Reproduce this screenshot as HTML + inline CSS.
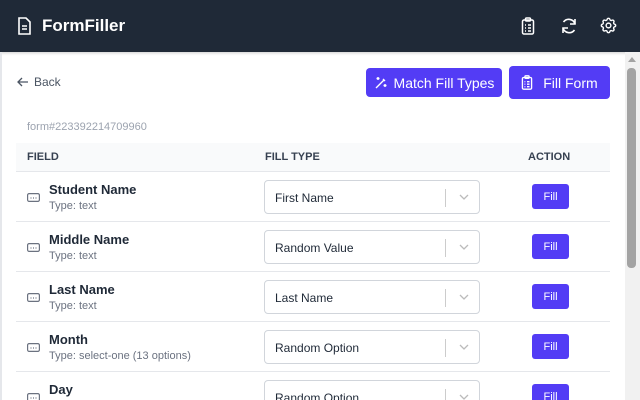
<!DOCTYPE html>
<html><head><meta charset="utf-8"><style>
*{box-sizing:border-box;margin:0;padding:0}
html,body{width:640px;height:400px;overflow:hidden;background:#fff}
body{font-family:"Liberation Sans",sans-serif}
#w{position:relative;width:640px;height:400px;overflow:hidden}
.hdr{position:absolute;left:0;top:0;width:640px;height:52px;background:#1f2937;box-shadow:0 1px 3px rgba(0,0,0,.2)}
.title{position:absolute;left:42px;top:16px;color:#fff;font-weight:bold;font-size:17px}
.lb{position:absolute;left:0;top:52px;width:2px;height:348px;background:#e5e7eb}
.sb{position:absolute;left:625px;top:52px;width:15px;height:348px;background:#f1f1f1}
.thumb{position:absolute;left:627px;top:68px;width:9px;height:200px;background:#a3a3a3;border-radius:4px}
.btn{position:absolute;background:#533cf5;color:#fff;border-radius:4px;font-size:14px;display:flex;align-items:center;justify-content:center;gap:6px}
.t{position:absolute;font-size:12px}
.row{position:absolute;left:16px;width:594px;height:50px;border-bottom:1px solid #e5e7eb}
.name{position:absolute;left:33px;top:10px;font-size:13px;font-weight:bold;color:#1f2937}
.type{position:absolute;left:33px;top:28px;font-size:11px;color:#6b7280}
.ic{position:absolute;left:11px;top:21px}
.sel{position:absolute;left:248px;top:8px;width:216px;height:34px;border:1px solid #d1d5db;border-radius:4px;font-size:12px;color:#1f2937;padding:10px 0 0 10px}
.sel:after{content:"";position:absolute;left:180px;top:8px;width:1px;height:18px;background:#ccc}
.chev{position:absolute;left:193px;top:10px}
.fb{position:absolute;left:516px;top:12px;width:37px;height:25px;background:#533cf5;color:#fff;border-radius:3px;font-size:11px;display:flex;align-items:center;justify-content:center}
</style></head><body><div id="w">
<div class="hdr">
<svg style="position:absolute;left:17px;top:17px" width="14" height="18" viewBox="0 0 14 18" fill="none" stroke="#fff" stroke-width="1.6"><path d="M2 1h7l4 4v12H2z"/><path d="M5 9h5M5 12h5"/></svg>
<div class="title">FormFiller</div>
<svg style="position:absolute;left:521px;top:17px" width="14" height="18" viewBox="0 0 14 18" fill="none" stroke="#fff" stroke-width="1.5"><rect x="1.5" y="3" width="11" height="14" rx="1.5"/><rect x="4.5" y="1" width="5" height="3" rx="1"/><path d="M4 8h1M7 8h3M4 11h1M7 11h3M4 14h1M7 14h3"/></svg>
<svg style="position:absolute;left:560px;top:17px" width="18" height="18" viewBox="0 0 18 18" fill="none" stroke="#fff" stroke-width="1.6"><path d="M15 7A6.5 6.5 0 0 0 3.5 5M3 11a6.5 6.5 0 0 0 11.5 2"/><path d="M15 2v5h-5M3 16v-5h5"/></svg>
<svg style="position:absolute;left:599px;top:16px" width="19" height="19" viewBox="0 0 24 24" fill="none" stroke="#fff" stroke-width="1.8"><path d="M10.3 4.3c.4-1.8 3-1.8 3.4 0a1.7 1.7 0 0 0 2.6 1.1c1.5-.9 3.3.8 2.4 2.4a1.7 1.7 0 0 0 1 2.5c1.8.4 1.8 3 0 3.4a1.7 1.7 0 0 0-1 2.6c.9 1.5-.9 3.3-2.4 2.4a1.7 1.7 0 0 0-2.6 1c-.4 1.8-3 1.8-3.4 0a1.7 1.7 0 0 0-2.6-1c-1.5.9-3.3-.9-2.4-2.4a1.7 1.7 0 0 0-1-2.6c-1.8-.4-1.8-3 0-3.4a1.7 1.7 0 0 0 1-2.5c-.9-1.6.9-3.3 2.4-2.4a1.7 1.7 0 0 0 2.6-1.1z"/><circle cx="12" cy="12" r="3"/></svg>
</div>
<div class="lb"></div>
<svg style="position:absolute;left:17px;top:77px" width="12" height="10" viewBox="0 0 12 10" fill="none" stroke="#4b5563" stroke-width="1.3"><path d="M11 5H1M5 1L1 5l4 4"/></svg>
<div class="t" style="left:34px;top:75px;color:#4b5563">Back</div>
<div class="btn" style="left:366px;top:68px;width:136px;height:29px"><svg width="14" height="14" viewBox="0 0 14 14" fill="none" stroke="#fff" stroke-width="1.4"><path d="M2 12l8-8M9 3l2 2"/><path d="M4 1v3M2.5 2.5h3M11 8v3M9.5 9.5h3"/></svg>Match Fill Types</div>
<div class="btn" style="left:509px;top:66px;width:101px;height:33px"><svg width="12" height="15" viewBox="0 0 14 18" fill="none" stroke="#fff" stroke-width="1.6"><rect x="1.5" y="3" width="11" height="14" rx="1.5"/><rect x="4.5" y="1" width="5" height="3" rx="1"/><path d="M4 8h1M7 8h3M4 11h1M7 11h3M4 14h1M7 14h3"/></svg>&nbsp;Fill Form</div>
<div class="t" style="left:27px;top:121px;color:#9ca3af;font-size:11px">form#223392214709960</div>
<div style="position:absolute;left:16px;top:143px;width:594px;height:29px;background:#f9fafb;border-bottom:1px solid #e5e7eb"></div>
<div class="t" style="left:27px;top:151px;font-size:11px;font-weight:bold;color:#374151">FIELD</div>
<div class="t" style="left:265px;top:151px;font-size:11px;font-weight:bold;color:#374151">FILL TYPE</div>
<div class="t" style="left:528px;top:151px;font-size:11px;font-weight:bold;color:#374151">ACTION</div>

<div class="row" style="top:172px"><svg class="ic" width="13" height="9" viewBox="0 0 13 9" fill="none" stroke="#6b7280" stroke-width="1.2"><rect x=".6" y=".6" width="11.8" height="7.8" rx="1.5"/><path d="M3.5 5h1M6 5h1M8.5 5h1"/></svg><div class="name">Student Name</div><div class="type">Type: text</div><div class="sel">First Name<svg class="chev" width="12" height="12" viewBox="0 0 12 12" fill="none" stroke="#bbb" stroke-width="1.3"><path d="M2 4l4 4 4-4"/></svg></div><div class="fb">Fill</div></div>
<div class="row" style="top:222px"><svg class="ic" width="13" height="9" viewBox="0 0 13 9" fill="none" stroke="#6b7280" stroke-width="1.2"><rect x=".6" y=".6" width="11.8" height="7.8" rx="1.5"/><path d="M3.5 5h1M6 5h1M8.5 5h1"/></svg><div class="name">Middle Name</div><div class="type">Type: text</div><div class="sel">Random Value<svg class="chev" width="12" height="12" viewBox="0 0 12 12" fill="none" stroke="#bbb" stroke-width="1.3"><path d="M2 4l4 4 4-4"/></svg></div><div class="fb">Fill</div></div>
<div class="row" style="top:272px"><svg class="ic" width="13" height="9" viewBox="0 0 13 9" fill="none" stroke="#6b7280" stroke-width="1.2"><rect x=".6" y=".6" width="11.8" height="7.8" rx="1.5"/><path d="M3.5 5h1M6 5h1M8.5 5h1"/></svg><div class="name">Last Name</div><div class="type">Type: text</div><div class="sel">Last Name<svg class="chev" width="12" height="12" viewBox="0 0 12 12" fill="none" stroke="#bbb" stroke-width="1.3"><path d="M2 4l4 4 4-4"/></svg></div><div class="fb">Fill</div></div>
<div class="row" style="top:322px"><svg class="ic" width="13" height="9" viewBox="0 0 13 9" fill="none" stroke="#6b7280" stroke-width="1.2"><rect x=".6" y=".6" width="11.8" height="7.8" rx="1.5"/><path d="M3.5 5h1M6 5h1M8.5 5h1"/></svg><div class="name">Month</div><div class="type">Type: select-one (13 options)</div><div class="sel">Random Option<svg class="chev" width="12" height="12" viewBox="0 0 12 12" fill="none" stroke="#bbb" stroke-width="1.3"><path d="M2 4l4 4 4-4"/></svg></div><div class="fb">Fill</div></div>
<div class="row" style="top:372px;height:28px;overflow:hidden;border:0"><svg class="ic" width="13" height="9" viewBox="0 0 13 9" fill="none" stroke="#6b7280" stroke-width="1.2"><rect x=".6" y=".6" width="11.8" height="7.8" rx="1.5"/><path d="M3.5 5h1M6 5h1M8.5 5h1"/></svg><div class="name">Day</div><div class="type">Type: select-one</div><div class="sel">Random Option<svg class="chev" width="12" height="12" viewBox="0 0 12 12" fill="none" stroke="#bbb" stroke-width="1.3"><path d="M2 4l4 4 4-4"/></svg></div><div class="fb">Fill</div></div>

<div class="sb"></div><div class="thumb"></div>
<div style="position:absolute;left:628px;top:57px;width:0;height:0;border-left:4px solid transparent;border-right:4px solid transparent;border-bottom:5px solid #a3a3a3"></div>
</div></body></html>
